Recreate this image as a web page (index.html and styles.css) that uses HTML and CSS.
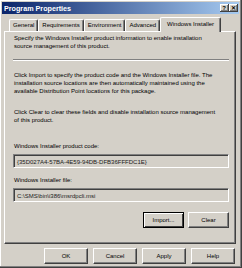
FILE: index.html
```html
<!DOCTYPE html>
<html>
<head>
<meta charset="utf-8" />
<title>Program Properties</title>
<link rel="stylesheet" href="styles.css">
</head>
<body>
<div class="window">
	<div class="titlebar">
		<span class="title">Program Properties</span>
		<span class="capbtn">?</span>
		<span class="capbtn">&#x2715;</span>
	</div>
	<div class="tabs">
		<div class="tab">General</div>
		<div class="tab">Requirements</div>
		<div class="tab">Environment</div>
		<div class="tab">Advanced</div>
		<div class="tab selected">Windows Installer</div>
	</div>
	<div class="panel">
		<p class="intro">Specify the Windows Installer product information to enable installation<br>source management of this product.</p>
		<div class="sep"></div>
		<p class="para first">Click Import to specify the product code and the Windows Installer file. The<br>installation source locations are then automatically maintained using the<br>available Distribution Point locations for this package.</p>
		<p class="para">Click Clear to clear these fields and disable installation source management<br>of this product.</p>
		<div class="label first">Windows Installer product code:</div>
		<div class="field">{35D027A4-57BA-4E59-94DB-DFB36FFFDC1E}</div>
		<div class="label">Windows Installer file:</div>
		<div class="field">C:\SMS\bin\i386\msrdpcli.msi</div>
		<div class="actions">
			<div class="button default">Import...</div>
			<div class="button">Clear</div>
		</div>
	</div>
	<div class="footer">
		<div class="button">OK</div>
		<div class="button">Cancel</div>
		<div class="button">Apply</div>
		<div class="button">Help</div>
	</div>
</div>
</body>
</html>
```
FILE: styles.css
```css
*{
	box-sizing: border-box;
	font-family: "Liberation Sans", Arial, sans-serif;
}

body{
	margin: 0;
	background-color: #d4d0c8;
}

.window{
	width: 242px;
	height: 268px;
	display: flex;
	flex-direction: column;
	padding: 2px 2px 0 2px;
	background-color: #d4d0c8;
	border-right: 1px solid #404040;
	border-bottom: 1px solid #404040;
	box-shadow: inset -1px -1px #808080, inset 1px 1px #ffffff;
	font-size: 6px;
	color: #000000;
}

.titlebar{
	height: 12px;
	display: flex;
	align-items: center;
	padding: 0 1px 0 2px;
	background: linear-gradient(to right, #0a246a, #a6caf0);
}

.title{
	flex: 1;
	color: #ffffff;
	font-weight: bold;
	font-size: 7.2px;
}

.capbtn{
	width: 9px;
	height: 8px;
	display: flex;
	align-items: center;
	justify-content: center;
	background-color: #d4d0c8;
	border-right: 1px solid #404040;
	border-bottom: 1px solid #404040;
	box-shadow: inset 1px 1px #ffffff, inset -1px -1px #808080;
	font-size: 6px;
	font-weight: bold;
	line-height: 1;
}

.tabs{
	display: flex;
	align-items: flex-end;
	height: 17px;
	padding-left: 7px;
	position: relative;
	z-index: 2;
}

.tab{
	height: 12px;
	line-height: 11px;
	padding: 0 3px;
	border-top: 1px solid #ffffff;
	border-left: 1px solid #ffffff;
	border-right: 1px solid #404040;
	border-radius: 2px 2px 0 0;
	box-shadow: inset -1px 0 #808080;
	white-space: nowrap;
}

.tab.selected{
	height: 15px;
	line-height: 12px;
	margin-bottom: -1px;
	padding: 0 6px;
	background-color: #d4d0c8;
}

.panel{
	height: 213px;
	margin: 0 3px 0 2px;
	padding: 2px 6px 0 8px;
	border-top: 1px solid #ffffff;
	border-left: 1px solid #ffffff;
	border-right: 1px solid #404040;
	border-bottom: 1px solid #404040;
	box-shadow: inset -1px -1px #808080;
	line-height: 8px;
}

p{
	margin: 0;
	padding-left: 1px;
	white-space: nowrap;
}

.sep{
	margin-top: 9px;
	height: 2px;
	border-top: 1px solid #808080;
	border-bottom: 1px solid #ffffff;
}

.para{
	margin-top: 13px;
}

.para.first{
	margin-top: 10px;
}

.label{
	margin-top: 8px;
	padding-left: 1px;
}

.label.first{
	margin-top: 18px;
}

.field{
	margin-top: 4px;
	height: 14px;
	line-height: 10px;
	padding: 2px 3px 0 3px;
	border-top: 1px solid #808080;
	border-left: 1px solid #808080;
	border-right: 1px solid #ffffff;
	border-bottom: 1px solid #ffffff;
	box-shadow: inset 1px 1px #404040, inset -1px -1px #d4d0c8;
	color: #202020;
}

.actions{
	display: flex;
	justify-content: flex-end;
	gap: 4px;
	margin-top: 10px;
}

.button{
	width: 41px;
	height: 16px;
	line-height: 14px;
	text-align: center;
	background-color: #d4d0c8;
	border-top: 1px solid #ffffff;
	border-left: 1px solid #ffffff;
	border-right: 1px solid #404040;
	border-bottom: 1px solid #404040;
	box-shadow: inset -1px -1px #808080;
}

.button.default{
	border: 1px solid #000000;
	box-shadow: inset 1px 1px #ffffff, inset -1px -1px #404040;
}

.footer{
	display: flex;
	justify-content: flex-end;
	gap: 5px;
	padding: 4px 4px 0 0;
}

.footer .button{
	width: 44px;
}
```
